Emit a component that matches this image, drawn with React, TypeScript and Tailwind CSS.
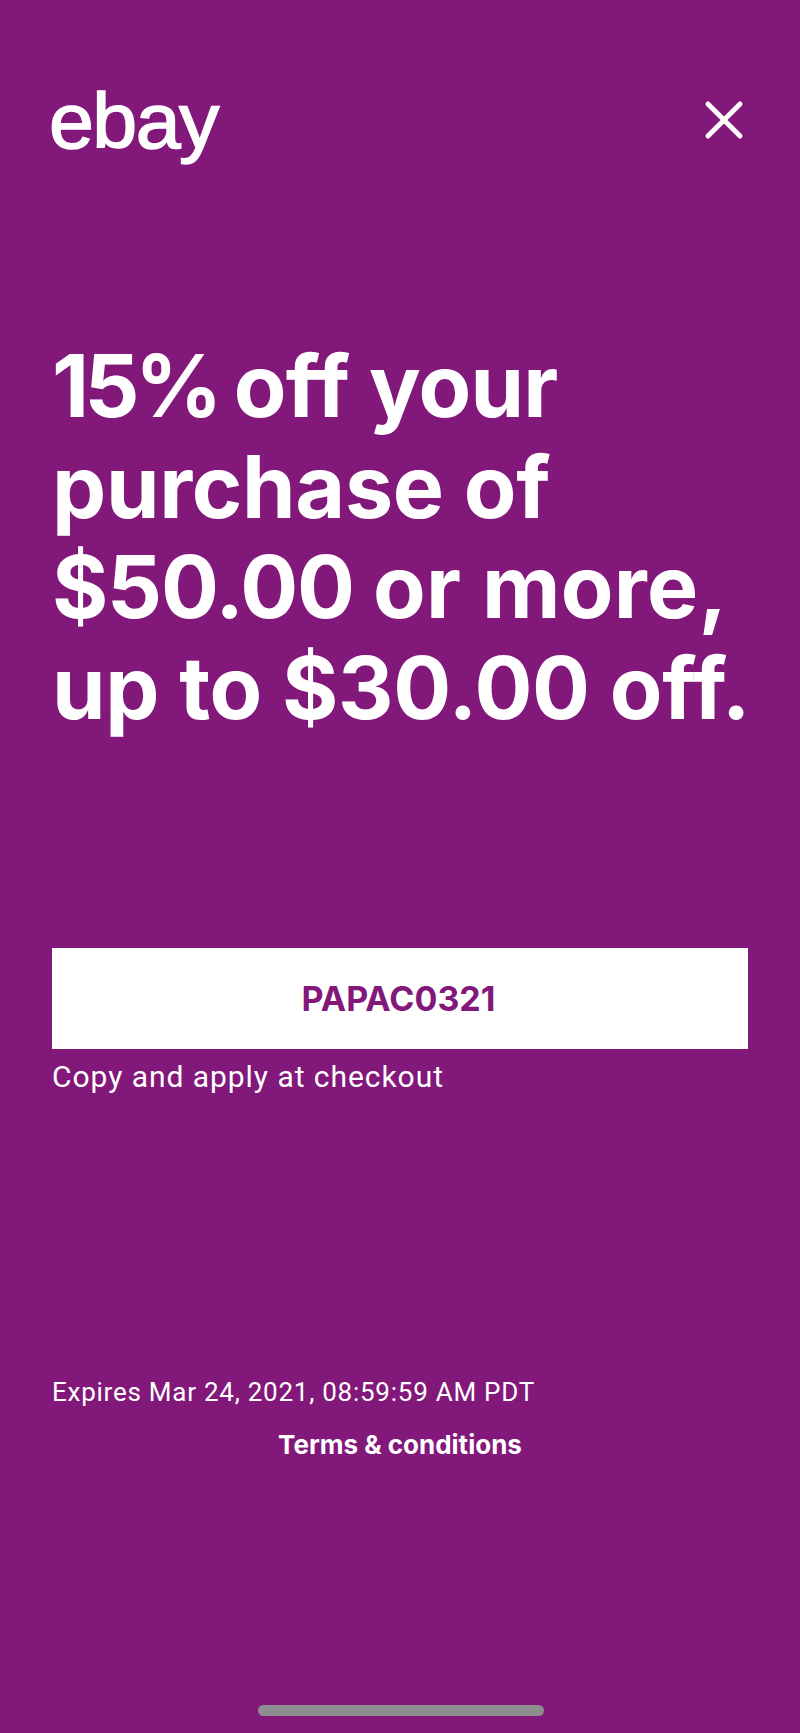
export default function App() {
  return (
    <div className="relative flex flex-col h-[1733px] w-[800px] bg-[#82187a] text-white font-['Inter',sans-serif] overflow-hidden">
      <div className="flex justify-between items-start pl-[49px] pr-[55px] pt-[71px]">
        <div className="font-['Liberation_Sans',sans-serif] text-[78px] leading-[100px] tracking-[-1.5px] origin-left scale-x-[1.035] [-webkit-text-stroke:1.5px_white]">ebay</div>
        <svg className="mt-[28px]" width="42" height="42" viewBox="0 0 42 42" fill="none" stroke="white" strokeWidth="5" strokeLinecap="round">
          <path d="M5 5 L37 37 M37 5 L5 37" />
        </svg>
      </div>

      <h1 className="mt-[165px] px-[52px] text-[86px] leading-[100.5px] font-bold whitespace-nowrap tracking-[-0.3px]">
        <span className="tracking-[-4.5px]">15% </span>
        <span className="tracking-[-0.7px]">off your</span>
        <br />
        purchase of
        <br />
        <span className="tracking-[-1.2px]">$50.00 </span>
        <span className="tracking-[0.3px]">or more,</span>
        <br />
        up to $30.00 off.
      </h1>

      <div className="mt-[210px] mx-[52px] h-[101px] bg-white flex items-center justify-center pr-[3px] text-[#82187a] text-[34px] font-bold">
        PAPAC0321
      </div>
      <div className="mt-[8px] px-[52px] font-['Roboto',sans-serif] text-[30px] leading-[40px] tracking-[0.95px]">Copy and apply at checkout</div>

      <div className="mt-[278px] px-[52px] font-['Roboto',sans-serif] text-[26px] leading-[34px] tracking-[0.75px]">Expires Mar 24, 2021, 08:59:59 AM PDT</div>
      <div className="mt-[19px] text-center text-[26px] leading-[34px] font-bold">Terms &amp; conditions</div>

      <div className="absolute left-[258px] top-[1705px] w-[286px] h-[11px] rounded-full bg-[#8e8e8e]" />
    </div>
  )
}
